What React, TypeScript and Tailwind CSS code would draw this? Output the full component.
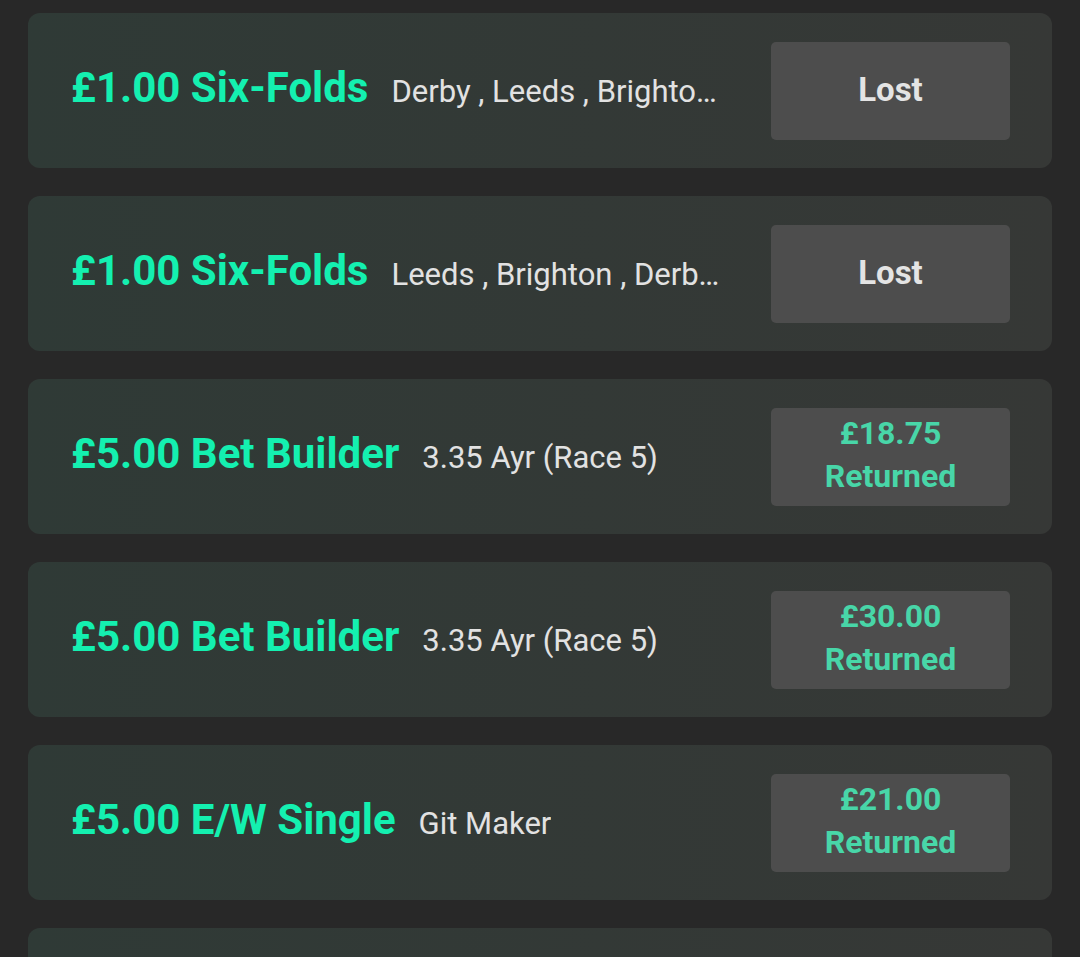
import React from "react";

type Bet = { title: string; sub: string; amount?: string };

const bets: Bet[] = [
  { title: "£1.00 Six-Folds", sub: "Derby , Leeds , Brighton , Hull , Bristol , Luton" },
  { title: "£1.00 Six-Folds", sub: "Leeds , Brighton , Derby , Hull , Bristol , Luton" },
  { title: "£5.00 Bet Builder", sub: "3.35 Ayr (Race 5)", amount: "£18.75" },
  { title: "£5.00 Bet Builder", sub: "3.35 Ayr (Race 5)", amount: "£30.00" },
  { title: "£5.00 E/W Single", sub: "Git Maker", amount: "£21.00" },
  { title: "£5.00 E/W Single", sub: "Git Maker", amount: "£12.00" },
];

function Card({ bet }: { bet: Bet }) {
  return (
    <div className="flex h-[155px] shrink-0 items-center rounded-[12px] bg-gradient-to-r from-[#2f3a36] to-[#363836] pl-[43px] pr-[42px]">
      <div className="flex min-w-0 flex-1 items-baseline pb-[6px]">
        <span className="shrink-0 whitespace-nowrap text-[42px] font-bold text-[#14f0b0]">{bet.title}</span>
        <span className="ml-[23px] min-w-0 truncate text-[31px] text-[#e2e2e2]">{bet.sub}</span>
      </div>
      <div className="ml-[46px] flex h-[98px] w-[239px] shrink-0 flex-col items-center justify-center rounded-[5px] bg-[#4d4d4d]">
        {bet.amount ? (
          <div className="flex flex-col items-center pb-[4px] text-[32px] font-bold leading-[43px] text-[#48d6a8]">
            <span>{bet.amount}</span>
            <span>Returned</span>
          </div>
        ) : (
          <span className="pb-[2px] text-[33px] font-bold text-[#e4e4e4]">Lost</span>
        )}
      </div>
    </div>
  );
}

export default function App() {
  return (
    <div
      className="flex h-[957px] w-[1080px] flex-col gap-[28px] overflow-hidden bg-[#282828] px-[28px] pt-[13px]"
      style={{ fontFamily: "Roboto, 'Noto Sans', sans-serif" }}
    >
      {bets.map((b, i) => (
        <Card key={i} bet={b} />
      ))}
    </div>
  );
}
